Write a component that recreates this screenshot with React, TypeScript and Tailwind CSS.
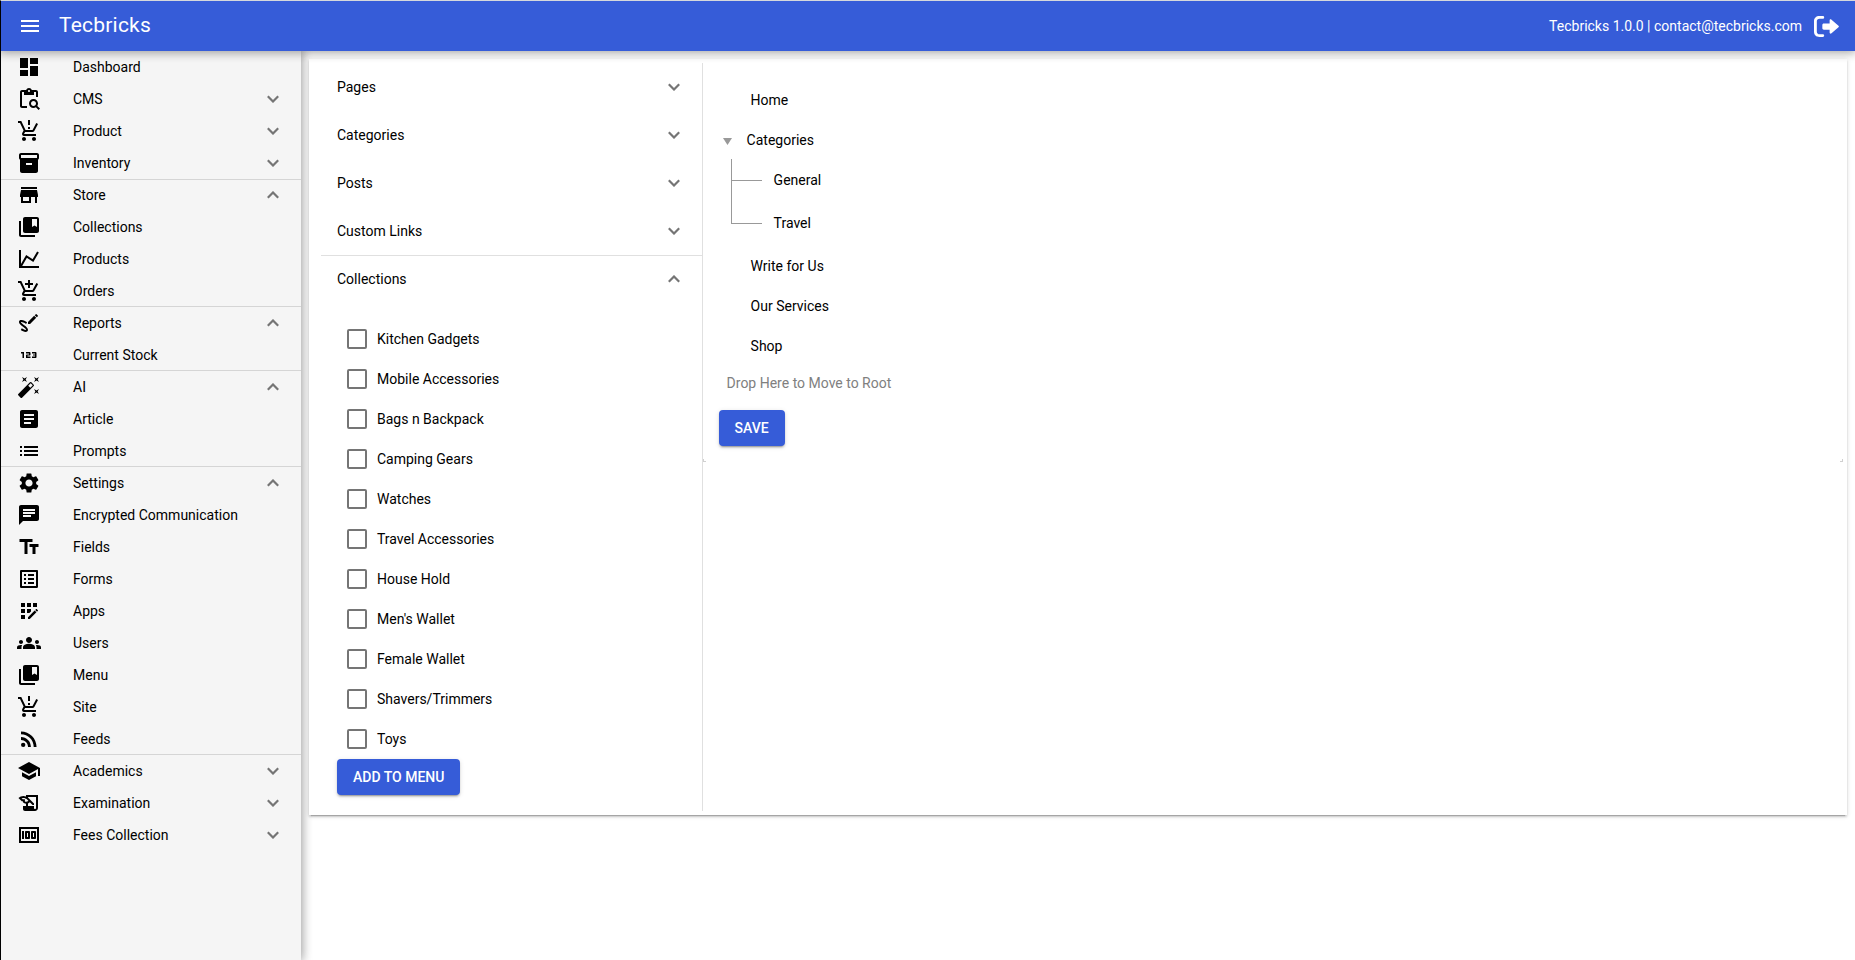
import type { ReactNode } from 'react'
import type { IconType } from 'react-icons'
import {
  Md123,
  MdAddShoppingCart,
  MdAppRegistration,
  MdArticle,
  MdAutoFixHigh,
  MdChat,
  MdCollectionsBookmark,
  MdContentPasteSearch,
  MdDashboard,
  MdGroups,
  MdHistoryEdu,
  MdInventory2,
  MdList,
  MdListAlt,
  MdMoney,
  MdProductionQuantityLimits,
  MdRssFeed,
  MdSchool,
  MdSettings,
  MdStore,
  MdTextFields,
} from 'react-icons/md'

type Toggle = 'open' | 'closed'

interface NavItem {
  label: string
  icon: IconType
  toggle?: Toggle
  line?: 'top' | 'bottom'
}

const ChartIcon = ({ className }: { className?: string }) => (
  <svg viewBox="0 0 24 24" className={className} fill="none" stroke="currentColor" strokeWidth="2">
    <path d="M3 3v17h19" />
    <path d="M4 19 9.5 9.5l6.5 4L21 5" />
  </svg>
)

const DrawIcon = ({ className }: { className?: string }) => (
  <svg viewBox="0 0 24 24" className={className} fill="currentColor">
    <path d="M9.75 20.85c1.78-.7 1.39-2.63.49-3.85-.89-1.25-2.12-2.11-3.36-2.94A9.817 9.817 0 0 1 4.54 12c-.28-.33-.85-.94-.27-1.06.59-.12 1.61.46 2.13.68.91.38 1.81.82 2.65 1.34l1.01-1.7C8.5 10.23 6.5 9.32 4.64 9.05c-1.06-.16-2.18.06-2.54 1.21-.32.99.19 1.99.77 2.77 1.37 1.83 3.5 2.71 5.09 4.29.34.33.75.72.95 1.18.21.44.16.47-.31.47-1.24 0-2.79-.97-3.8-1.61l-1.01 1.7c1.53.94 4.09 2.41 5.96 1.79m11.09-15.6c.22-.22.22-.58 0-.79l-1.3-1.3a.562.562 0 0 0-.78 0l-1.02 1.02 2.09 2.09M11 10.92V13h2.08l6.15-6.15-2.1-2.09L11 10.92Z" />
  </svg>
)

const navItems: NavItem[] = [
  { label: 'Dashboard', icon: MdDashboard },
  { label: 'CMS', icon: MdContentPasteSearch, toggle: 'closed' },
  { label: 'Product', icon: MdProductionQuantityLimits, toggle: 'closed' },
  { label: 'Inventory', icon: MdInventory2, toggle: 'closed' },
  { label: 'Store', icon: MdStore, toggle: 'open', line: 'top' },
  { label: 'Collections', icon: MdCollectionsBookmark },
  { label: 'Products', icon: ChartIcon },
  { label: 'Orders', icon: MdAddShoppingCart, line: 'bottom' },
  { label: 'Reports', icon: DrawIcon, toggle: 'open' },
  { label: 'Current Stock', icon: Md123, line: 'bottom' },
  { label: 'AI', icon: MdAutoFixHigh, toggle: 'open' },
  { label: 'Article', icon: MdArticle },
  { label: 'Prompts', icon: MdList, line: 'bottom' },
  { label: 'Settings', icon: MdSettings, toggle: 'open' },
  { label: 'Encrypted Communication', icon: MdChat },
  { label: 'Fields', icon: MdTextFields },
  { label: 'Forms', icon: MdListAlt },
  { label: 'Apps', icon: MdAppRegistration },
  { label: 'Users', icon: MdGroups },
  { label: 'Menu', icon: MdCollectionsBookmark },
  { label: 'Site', icon: MdProductionQuantityLimits },
  { label: 'Feeds', icon: MdRssFeed, line: 'bottom' },
  { label: 'Academics', icon: MdSchool, toggle: 'closed' },
  { label: 'Examination', icon: MdHistoryEdu, toggle: 'closed' },
  { label: 'Fees Collection', icon: MdMoney, toggle: 'closed' },
]

const lineClass = {
  top: 'shadow-[inset_0_1px_0_#d5d5d5]',
  bottom: 'shadow-[inset_0_-1px_0_#d5d5d5]',
}

const sources = ['Pages', 'Categories', 'Posts', 'Custom Links']

const collections = [
  'Kitchen Gadgets',
  'Mobile Accessories',
  'Bags n Backpack',
  'Camping Gears',
  'Watches',
  'Travel Accessories',
  'House Hold',
  "Men's Wallet",
  'Female Wallet',
  'Shavers/Trimmers',
  'Toys',
]

function Chevron({ toggle }: { toggle: Toggle }) {
  return (
    <svg viewBox="0 0 12 8" className="w-3 h-2 shrink-0 text-[#757575]" fill="none" stroke="currentColor" strokeWidth="2.2">
      <path d={toggle === 'open' ? 'M0.800 6.700 6 1.500l5.200 5.200' : 'M0.800 1.300 6 6.500l5.200-5.200'} />
    </svg>
  )
}

function Button({ children }: { children: ReactNode }) {
  return (
    <button className="h-9 px-4 rounded bg-[#365cd8] text-white text-sm leading-9 font-medium shadow-[0_3px_1px_-2px_rgba(0,0,0,0.2),0_2px_2px_0_rgba(0,0,0,0.14),0_1px_5px_0_rgba(0,0,0,0.12)]">
      {children}
    </button>
  )
}

function Sidebar() {
  return (
    <nav className="w-[301px] shrink-0 border-l border-black bg-[#f5f5f5] shadow-[0_0_10px_2px_rgba(0,0,0,0.2),0_0_10px_rgba(0,0,0,0.24)]">
      {navItems.map(({ label, icon: Icon, toggle, line }) => (
        <div key={label} className={`flex items-center h-8 pl-4 pr-[22px] ${line ? lineClass[line] : ''}`}>
          <Icon className="w-6 h-6 shrink-0" />
          <span className="ml-8 flex-1 text-sm">{label}</span>
          {toggle && <Chevron toggle={toggle} />}
        </div>
      ))}
    </nav>
  )
}

function SourcePanel() {
  return (
    <div className="w-[381.6px] shrink-0 border-r border-[#e0e0e0]">
      {sources.map((label) => (
        <div key={label} className="flex items-center justify-between h-12 pl-4 pr-[22px]">
          {label}
          <Chevron toggle="closed" />
        </div>
      ))}
      <div className="flex items-center justify-between h-12 pl-4 pr-[22px] shadow-[inset_0_1px_0_#e0e0e0]">
        Collections
        <Chevron toggle="open" />
      </div>
      <div className="pl-4 pt-4">
        {collections.map((label) => (
          <label key={label} className="flex items-center h-10 pl-2.5">
            <span className="w-5 h-5 shrink-0 rounded-xs border-2 border-[#757575]" />
            <span className="ml-2.5">{label}</span>
          </label>
        ))}
        <Button>ADD TO MENU</Button>
      </div>
    </div>
  )
}

function MenuTree() {
  return (
    <div className="relative flex-1 h-[399px] pt-[17px] pl-4">
      <div className="flex items-center h-10 pl-8">Home</div>
      <div className="flex items-center h-10 pl-1">
        <svg viewBox="0 0 9 7" className="w-[9px] h-[7px] mt-[3px] text-[#999]" fill="currentColor">
          <path d="M0 0h9L4.500 7z" />
        </svg>
        <span className="ml-[15px]">Categories</span>
      </div>
      <div className="-mt-px ml-3 pb-[22px]">
        <div className="w-[31px] h-[65px] pt-[21px] border-l border-[#999] whitespace-nowrap">
          <div className="h-11 border-y border-[#999]">
            <div className="ml-[42px] leading-4 -translate-y-[9px]">General</div>
            <div className="ml-[42px] leading-4 translate-y-[18px]">Travel</div>
          </div>
        </div>
      </div>
      <div className="flex items-center h-10 pl-8">Write for Us</div>
      <div className="flex items-center h-10 pl-8">Our Services</div>
      <div className="flex items-center h-10 pl-8">Shop</div>
      <div className="h-[34px] pl-2 leading-[34px] text-[#808080]">Drop Here to Move to Root</div>
      <div className="mt-2.5">
        <Button>SAVE</Button>
      </div>
      {/* resize corners */}
      <span className="absolute bottom-0 left-0 size-[3px] border-b border-l border-[#d0d0d0]" />
      <span className="absolute bottom-0 right-0 size-[3px] border-b border-r border-[#d0d0d0]" />
    </div>
  )
}

export default function App() {
  return (
    <div className="flex flex-col h-[960px] overflow-hidden bg-white text-black text-sm font-[Roboto,sans-serif]">
      <header className="relative z-20 flex items-center h-[51px] shrink-0 border-t border-l border-t-[#d5d8dc] border-l-black bg-[#365cd8] text-white pl-5 pr-4 shadow-[0_0_10px_2px_rgba(0,0,0,0.2),0_0_10px_rgba(0,0,0,0.24)]">
        <svg viewBox="0 0 18 12" className="w-[18px] h-3" fill="currentColor">
          <path d="M0 0h18v2H0zM0 5h18v2H0zM0 10h18v2H0z" />
        </svg>
        <h1 className="ml-5 mb-0.5 text-[21px] leading-7 tracking-[0.01em]">Tecbricks</h1>
        <span className="ml-auto">Tecbricks 1.0.0 | contact@tecbricks.com</span>
        <svg viewBox="0 0 24 20" className="ml-3 w-[25px] h-[21px]" fill="currentColor">
          <path d="M8.500 0a1.300 1.300 0 0 1 0 2.600H5.500C3.600 2.600 2.700 3.500 2.700 5.300v9.400c0 1.800.9 2.700 2.800 2.700h3a1.300 1.300 0 0 1 0 2.600H5.300C2 20 0 18 0 15V5c0-3 2-5 5.300-5zM15 4.200c0-1.100 1-1.500 1.800-.7l6.700 5.800q.8.700 0 1.400l-6.700 5.800c-.8.800-1.800.4-1.800-.7V13H9.500C8.500 13 8 12.500 8 11.500v-3C8 7.500 8.500 7 9.500 7H15z" />
        </svg>
      </header>
      <div className="flex flex-1 min-h-0">
        <Sidebar />
        <main className="flex-1 pt-2 px-2">
          <section className="relative flex h-[756px] py-1 pl-3 pr-1 bg-white shadow-[0_3px_1px_-2px_rgba(0,0,0,0.2),0_2px_2px_0_rgba(0,0,0,0.14),0_1px_5px_0_rgba(0,0,0,0.12)]">
            <SourcePanel />
            <MenuTree />
          </section>
        </main>
      </div>
    </div>
  )
}
